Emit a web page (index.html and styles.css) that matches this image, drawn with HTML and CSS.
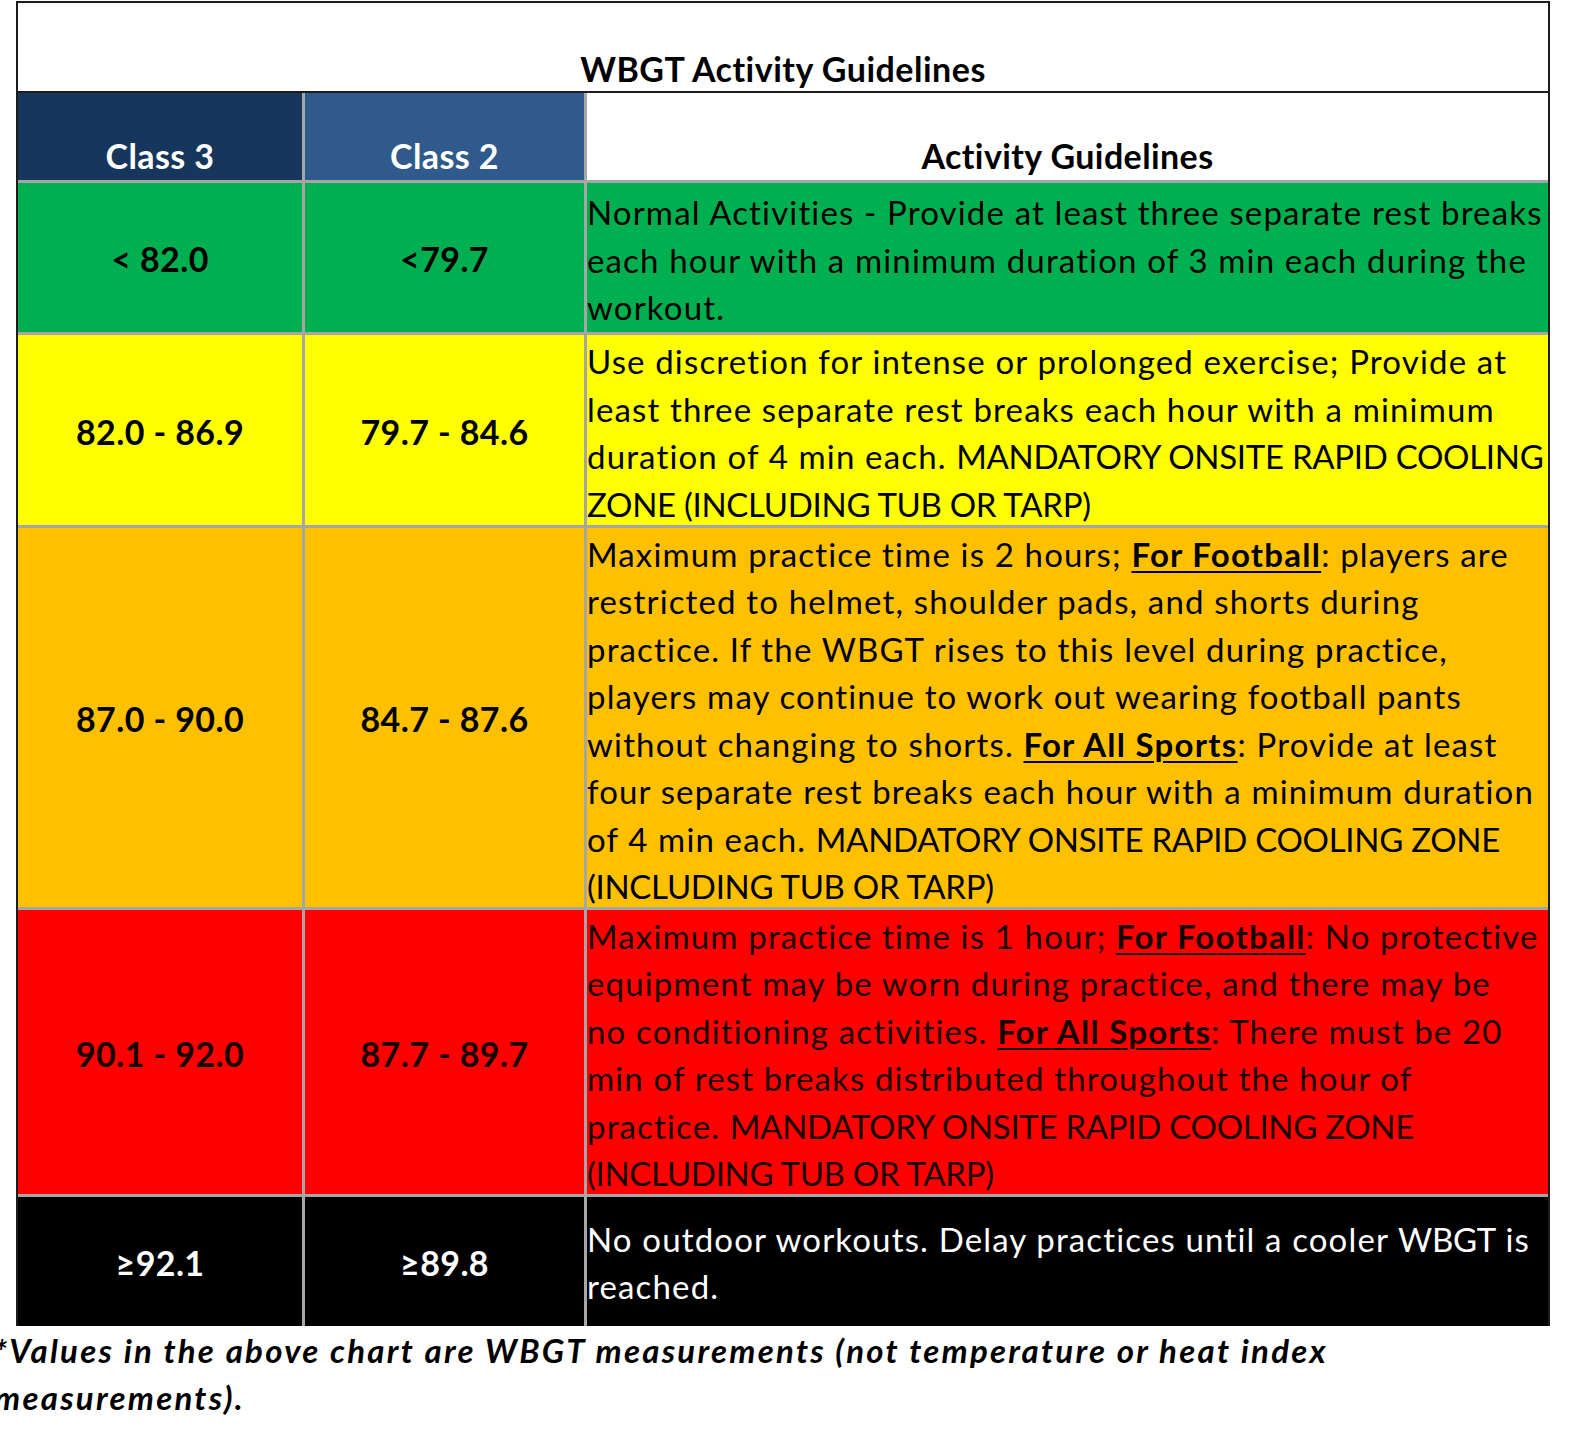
FILE: index.html
```html
<!DOCTYPE html>
<html lang="en">
<head>
<meta charset="utf-8">
<title>WBGT Activity Guidelines</title>
<link rel="stylesheet" href="styles.css">
</head>
<body>
<div class="sheet">
  <div class="title">WBGT Activity Guidelines</div>
  <div class="grid">
    <div class="cell head c3">Class 3</div>
    <div class="cell head c2">Class 2</div>
    <div class="cell head act">Activity Guidelines</div>

    <div class="cell num green">&lt; 82.0</div>
    <div class="cell num green">&lt;79.7</div>
    <div class="cell txt green"><div class="lines">Normal Activities - Provide at least three separate rest breaks<br>each hour with a minimum duration of 3 min each during the<br>workout.</div></div>

    <div class="cell num yellow">82.0 - 86.9</div>
    <div class="cell num yellow">79.7 - 84.6</div>
    <div class="cell txt yellow"><div class="lines">Use discretion for intense or prolonged exercise; Provide at<br>least three separate rest breaks each hour with a minimum<br>duration of 4 min each. <span class="caps">MANDATORY ONSITE RAPID COOLING</span><br><span class="caps">ZONE (INCLUDING TUB OR TARP)</span></div></div>

    <div class="cell num orange">87.0 - 90.0</div>
    <div class="cell num orange">84.7 - 87.6</div>
    <div class="cell txt orange"><div class="lines">Maximum practice time is 2 hours; <b class="ul">For Football</b>: players are<br>restricted to helmet, shoulder pads, and shorts during<br>practice. If the WBGT rises to this level during practice,<br>players may continue to work out wearing football pants<br>without changing to shorts. <b class="ul">For All Sports</b>: Provide at least<br>four separate rest breaks each hour with a minimum duration<br>of 4 min each. <span class="caps">MANDATORY ONSITE RAPID COOLING ZONE</span><br><span class="caps">(INCLUDING TUB OR TARP)</span></div></div>

    <div class="cell num red">90.1 - 92.0</div>
    <div class="cell num red">87.7 - 89.7</div>
    <div class="cell txt red"><div class="lines">Maximum practice time is 1 hour; <b class="ul">For Football</b>: No protective<br>equipment may be worn during practice, and there may be<br>no conditioning activities. <b class="ul">For All Sports</b>: There must be 20<br>min of rest breaks distributed throughout the hour of<br>practice. <span class="caps">MANDATORY ONSITE RAPID COOLING ZONE</span><br><span class="caps">(INCLUDING TUB OR TARP)</span></div></div>

    <div class="cell num black">≥92.1</div>
    <div class="cell num black">≥89.8</div>
    <div class="cell txt black"><div class="lines">No outdoor workouts. Delay practices until a cooler <span class="caps">WBGT</span> is<br>reached.</div></div>
  </div>
</div>
<p class="note">*Values in the above chart are WBGT measurements (not temperature or heat index<br>measurements).</p>
</body>
</html>
```

FILE: styles.css
```css
html, body {
  margin: 0;
  padding: 0;
  background: #ffffff;
}

body {
  font-family: Lato, "Open Sans", "Liberation Sans", sans-serif;
  font-size: 33px;
  color: #000;
  overflow: hidden;
}

.sheet {
  width: 1530px;
  margin: 1px 0 0 16px;
  border: 2px solid #1c1c1c;
  border-bottom: none;
}

.title {
  height: 90px;
  border-bottom: 2px solid #1c1c1c;
  display: flex;
  align-items: flex-end;
  justify-content: center;
  font-weight: 700;
  font-size: 34px;
  letter-spacing: 0.5px;
  line-height: 40px;
  padding-bottom: 2px;
  box-sizing: border-box;
}

.grid {
  display: grid;
  grid-template-columns: 284px 279px 961px;
  grid-template-rows: 87px 149px 190px 379px 284px 129px;
  gap: 3px;
  background: #a6a6a6;
}

.cell {
  display: flex;
  align-items: center;
  box-sizing: border-box;
  min-width: 0;
}

.head {
  align-items: flex-end;
  justify-content: center;
  font-weight: 700;
  font-size: 34px;
  letter-spacing: 0.4px;
  line-height: 40px;
  padding-bottom: 4px;
}

.c3 { background: #17365d; color: #fff; }
.c2 { background: #2f5a8b; color: #fff; }
.act { background: #fff; color: #000; }

.num {
  justify-content: center;
  font-weight: 700;
  font-size: 34px;
  letter-spacing: 0.4px;
  padding-top: 2px;
}

.txt {
  padding-top: 6px;
}

.black.txt {
  padding-top: 3px;
}

.lines {
  white-space: nowrap;
  line-height: 47.5px;
  letter-spacing: 1.15px;
}

.caps {
  letter-spacing: -0.3px;
}

.green { background: #00b050; }
.yellow { background: #ffff00; }
.orange { background: #ffc000; }
.red { background: #ff0000; color: #140000; }
.black { background: #000000; color: #ffffff; }

.ul {
  font-weight: 700;
  letter-spacing: 1.25px;
  text-decoration: underline;
  text-decoration-thickness: 2px;
  text-underline-offset: 4px;
}

.note {
  margin: 1px 0 0 -6px;
  font-weight: 700;
  font-style: italic;
  line-height: 47px;
  letter-spacing: 2.25px;
  white-space: nowrap;
}
```
